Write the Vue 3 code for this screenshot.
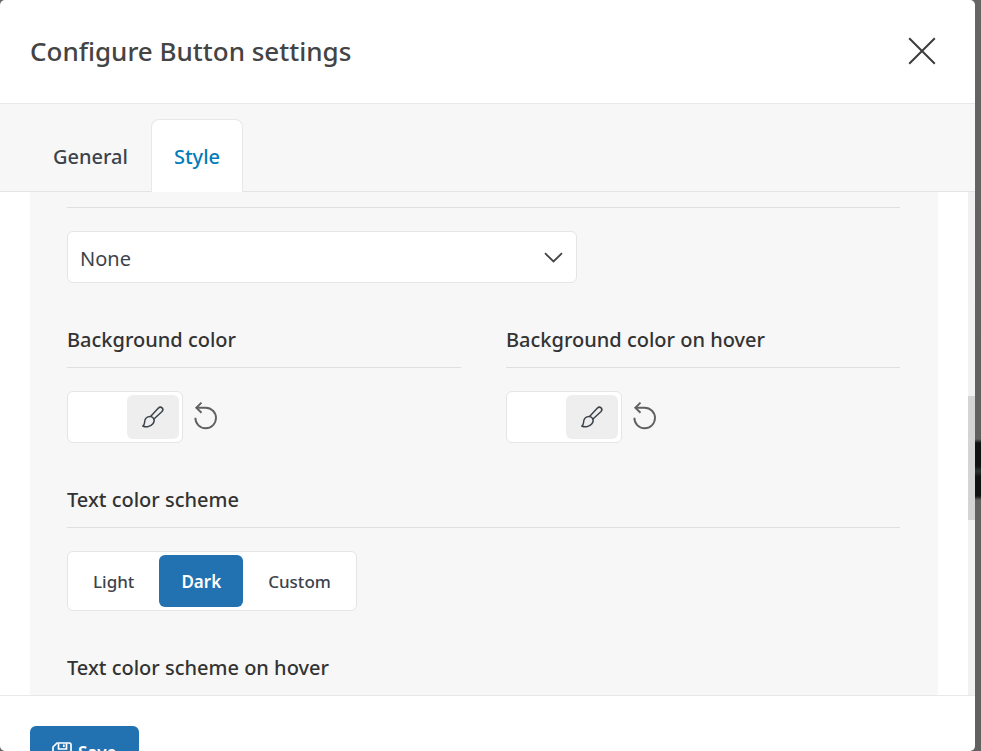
<script setup>
import { ref } from 'vue'

const tab = ref('Style')
const tabs = ['General', 'Style']
const preset = ref('None')
const scheme = ref('Dark')
const schemes = ['Light', 'Dark', 'Custom']
const colorFields = ['Background color', 'Background color on hover']
</script>

<template>
  <div class="backdrop">
    <section class="modal" role="dialog" aria-labelledby="modal-title">
      <header class="head">
        <h1 id="modal-title">Configure Button settings</h1>
        <button class="close" type="button" aria-label="Close">
          <svg width="28" height="28" viewBox="0 0 28 28" fill="none" stroke="#3c3c3c" stroke-width="2">
            <path d="M1.2 1.2 26.8 26.8M26.8 1.2 1.2 26.8" />
          </svg>
        </button>
      </header>

      <nav class="tabs">
        <button
          v-for="t in tabs"
          :key="t"
          type="button"
          class="tab"
          :class="{ active: t === tab }"
          @click="tab = t"
        >{{ t }}</button>
      </nav>

      <div class="body">
        <main class="panel">
          <div class="field first">
            <div class="select">
              <select v-model="preset" aria-label="Preset">
                <option>None</option>
              </select>
              <svg width="20" height="12" viewBox="0 0 20 12" fill="none" stroke="#444" stroke-width="1.8">
                <path d="M1 2.200 9.500 10.400l8.500-8.200" />
              </svg>
            </div>
          </div>

          <div class="columns">
            <div v-for="label in colorFields" :key="label" class="field">
              <h2>{{ label }}</h2>
              <div class="color-row">
                <button class="color" type="button" :aria-label="label">
                  <span class="swatch"></span>
                  <span class="brush">
                    <svg width="24" height="24" viewBox="0 0 24 24" fill="none" stroke="#3c434a" stroke-width="1.5" stroke-linejoin="round" stroke-linecap="round">
                      <path d="M9.800 11.300 17.200 3.300c1.200-1.200 2.900-1.300 3.900-.4 1 1 .9 2.700-.3 3.900L12.700 14.300" />
                      <path d="M6.900 11.900c2-.8 4.100-.4 5.200 1 1.300 1.600 1.200 4.100-.2 5.800-1.300 1.600-2.900 2.600-5.200 3-1.700.3-3.500.1-4.900-.7 1.500-.8 1.700-2 1.800-3.700.1-2.500 1.200-4.500 3.300-5.400z" />
                    </svg>
                  </span>
                </button>
                <button class="reset" type="button" :aria-label="'Reset ' + label">
                  <svg width="24" height="28" viewBox="0 0 24 28" fill="none" stroke="#606060" stroke-width="1.900">
                    <path d="M1.400 14.700A10.300 10.300 0 1 0 11.700 4.700H2.600" />
                    <path d="M7.500-.4 2.300 4.700l5.200 5.100" />
                  </svg>
                </button>
              </div>
            </div>
          </div>

          <div class="field">
            <h2>Text color scheme</h2>
            <div class="segmented">
              <button
                v-for="s in schemes"
                :key="s"
                type="button"
                :class="{ active: s === scheme }"
                @click="scheme = s"
              >{{ s }}</button>
            </div>
          </div>

          <div class="field">
            <h2>Text color scheme on hover</h2>
          </div>
        </main>
        <div class="track"><div class="thumb"></div></div>
      </div>

      <footer class="foot">
        <button class="save" type="button">
          <svg width="20" height="20" viewBox="0 0 20 20" fill="none" stroke="#fff" stroke-width="1.700" stroke-linejoin="round">
            <path d="M5 1h12.500q1.500 0 1.500 1.500v15q0 1.500-1.500 1.500h-15Q1 19 1 17.500V5z" />
            <path d="M6.500 1.500V7h8V1.500M4.500 19v-7.500h11V19M11.800 2.500v2.500" />
          </svg>
          <span>Save</span>
        </button>
      </footer>
    </section>
  </div>
</template>

<style>
body {
  margin: 0;
  overflow: hidden;
}
</style>

<style scoped>
.backdrop {
  box-sizing: border-box;
  height: 100vh;
  padding-right: 6px;
  font-family: "Noto Sans", sans-serif;
  background: linear-gradient(#666564 0, #62615f 439px, #101112 443px, #101112 466px, #2b3333 471px, #101112 477px, #101112 496px, #62615f 500px, #62615f 100%);
}
.modal {
  display: flex;
  flex-direction: column;
  height: 100%;
  overflow: hidden;
  background: #fff;
  border-radius: 5px;
}
button {
  margin: 0;
  padding: 0;
  border: 0;
  background: none;
  font-family: inherit;
  cursor: pointer;
}
svg {
  display: block;
  overflow: visible;
}
.head {
  flex: none;
  display: flex;
  align-items: center;
  justify-content: space-between;
  padding: 31px 39px 32px 30px;
  border-bottom: 1px solid #e8e8e8;
}
h1 {
  margin: 0;
  font-size: 26px;
  line-height: 40px;
  font-weight: 500;
  color: #444;
}
.tabs {
  flex: none;
  display: flex;
  padding: 15px 30px 0;
  background: #f7f7f7;
  border-bottom: 1px solid #e2e4e7;
}
.tab {
  height: 73px;
  margin-bottom: -1px;
  padding: 0 22px;
  border: 1px solid transparent;
  border-bottom: 0;
  border-radius: 8px 8px 0 0;
  font-size: 20px;
  font-weight: 500;
  color: #3c434a;
}
.tab.active {
  background: #fff;
  border-color: #e8e8e8;
  color: #007cba;
}
.body {
  flex: 1;
  min-height: 0;
  display: flex;
  padding-left: 30px;
  overflow: hidden;
}
.panel {
  flex: 1;
  display: flex;
  flex-direction: column;
  gap: 45px;
  margin-right: 30px;
  padding: 15px 38px 0 37px;
  background: #f7f7f7;
}
.first {
  padding-top: 23px;
  border-top: 1px solid #dfdfdf;
}
.columns {
  display: grid;
  grid-template-columns: 1fr 1fr;
  gap: 45px;
}
h2 {
  margin: 0 0 23px;
  padding-bottom: 15px;
  border-bottom: 1px solid #dfdfdf;
  font-size: 20px;
  line-height: 24px;
  font-weight: 500;
  color: #333;
}
.select {
  display: grid;
  align-items: center;
  max-width: 510px;
}
.select select,
.select svg {
  grid-area: 1 / 1;
}
.select svg {
  justify-self: end;
  margin-right: 13px;
  pointer-events: none;
}
select {
  appearance: none;
  box-sizing: border-box;
  width: 100%;
  height: 52px;
  padding: 2px 12px 0;
  border: 1px solid #e5e5e5;
  border-radius: 6px;
  background: #fff;
  font-family: inherit;
  font-size: 20px;
  color: #3c434a;
}
.color-row {
  display: flex;
  align-items: center;
  gap: 11px;
}
.color {
  display: flex;
  padding: 3px;
  border: 1px solid #e5e5e5;
  border-radius: 6px;
  background: #fff;
}
.swatch {
  width: 56px;
  height: 44px;
}
.brush {
  display: grid;
  place-items: center;
  width: 52px;
  height: 44px;
  border-radius: 6px;
  background: #eee;
}
.segmented {
  display: inline-flex;
  gap: 3px;
  padding: 3px;
  border: 1px solid #e5e5e5;
  border-radius: 6px;
  background: #fff;
}
.segmented button {
  height: 52px;
  padding: 0 22px;
  border-radius: 6px;
  font-size: 17px;
  font-weight: 500;
  color: #3c434a;
}
.segmented button.active {
  background: #2271b1;
  color: #fff;
  font-weight: 600;
}
.track {
  flex: none;
  width: 7px;
  background: #f1f1f1;
}
.thumb {
  height: 124px;
  margin-top: 204px;
  background: #d4d4d4;
}
.foot {
  flex: none;
  height: 55px;
  border-top: 1px solid #e8e8e8;
}
.save {
  display: flex;
  align-items: center;
  gap: 6px;
  height: 52px;
  margin: 30px 0 0 30px;
  padding: 0 22px;
  border-radius: 6px;
  background: #2271b1;
  color: #fff;
  font-size: 17px;
  font-weight: 600;
}
</style>
